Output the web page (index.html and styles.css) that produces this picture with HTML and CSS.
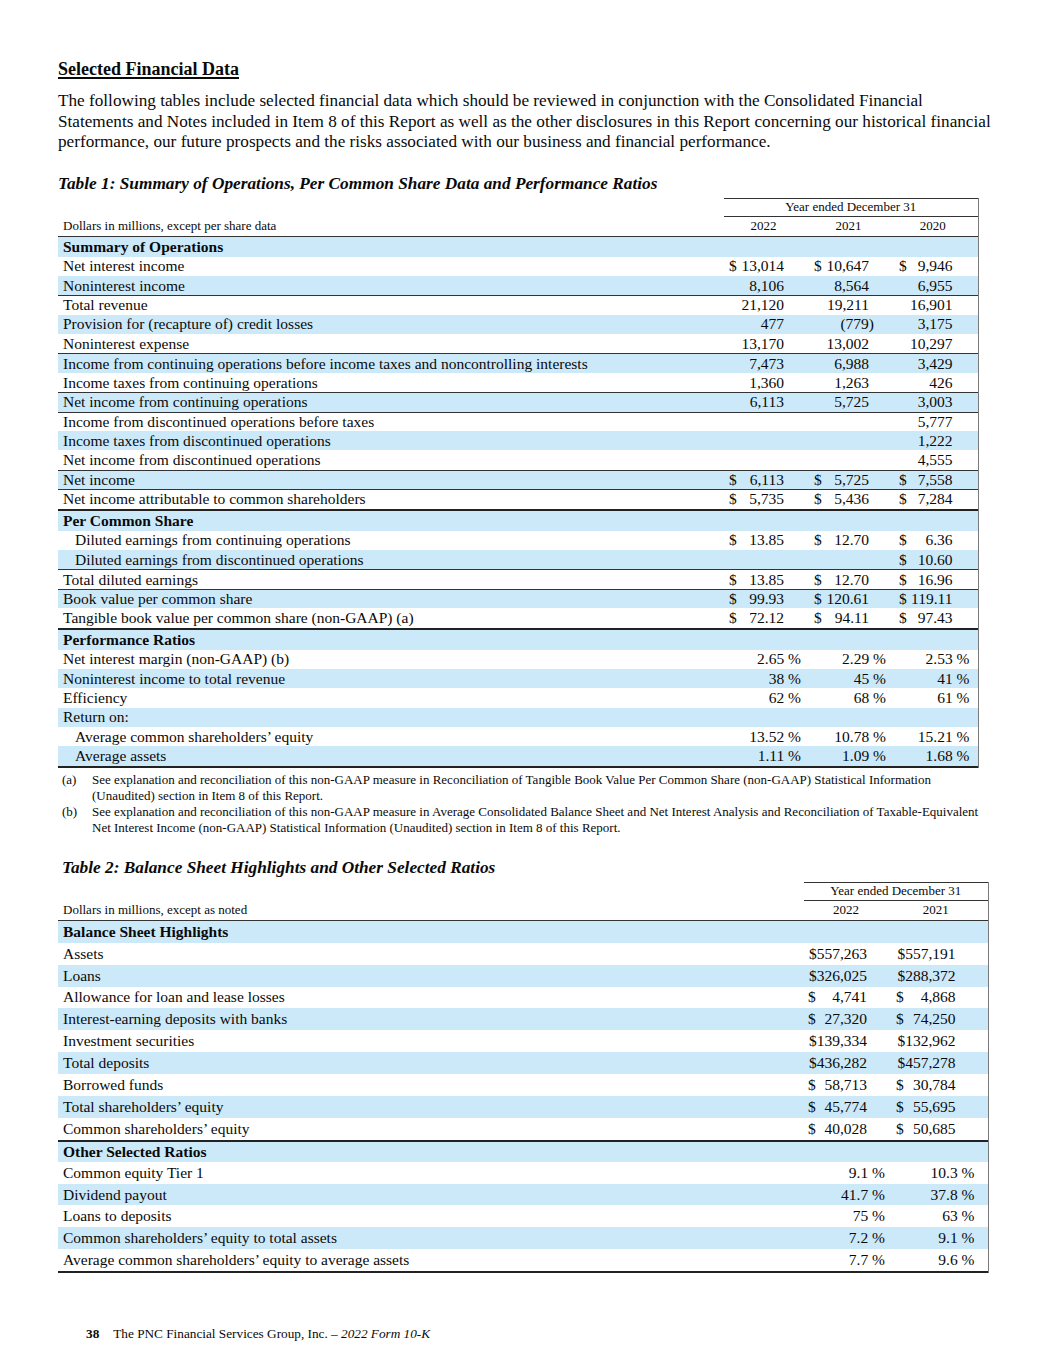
FILE: index.html
```html
<!DOCTYPE html>
<html lang="en">
<head>
<meta charset="utf-8">
<title>Selected Financial Data</title>
<link rel="stylesheet" href="styles.css">
</head>
<body>
<div class="page">
  <h1 class="title">Selected Financial Data</h1>
  <p class="intro">The following tables include selected financial data which should be reviewed in conjunction with the Consolidated Financial Statements and Notes included in Item 8 of this Report as well as the other disclosures in this Report concerning our historical financial performance, our future prospects and the risks associated with our business and financial performance.</p>

  <h2 class="tcap">Table 1: Summary of Operations, Per Common Share Data and Performance Ratios</h2>
  <div class="tbl t1">
    <div class="hdr1"><div></div><div class="ye">Year ended December 31</div></div>
    <div class="hdr2"><div class="unit">Dollars in millions, except per share data</div><div class="yr">2022</div><div class="yr">2021</div><div class="yr">2020</div></div>

    <div class="row sec b first"><div class="lbl">Summary of Operations</div><div></div><div></div><div></div></div>
    <div class="row"><div class="lbl">Net interest income</div><div class="v"><span>$</span><span class="n">13,014</span></div><div class="v"><span>$</span><span class="n">10,647</span></div><div class="v"><span>$</span><span class="n">9,946</span></div></div>
    <div class="row b"><div class="lbl">Noninterest income</div><div class="v"><span class="n">8,106</span></div><div class="v"><span class="n">8,564</span></div><div class="v"><span class="n">6,955</span></div></div>
    <div class="row bt"><div class="lbl">Total revenue</div><div class="v"><span class="n">21,120</span></div><div class="v"><span class="n">19,211</span></div><div class="v"><span class="n">16,901</span></div></div>
    <div class="row b"><div class="lbl">Provision for (recapture of) credit losses</div><div class="v"><span class="n">477</span></div><div class="v"><span class="n">(779<span class="hang">)</span></span></div><div class="v"><span class="n">3,175</span></div></div>
    <div class="row"><div class="lbl">Noninterest expense</div><div class="v"><span class="n">13,170</span></div><div class="v"><span class="n">13,002</span></div><div class="v"><span class="n">10,297</span></div></div>
    <div class="row b bt"><div class="lbl">Income from continuing operations before income taxes and noncontrolling interests</div><div class="v"><span class="n">7,473</span></div><div class="v"><span class="n">6,988</span></div><div class="v"><span class="n">3,429</span></div></div>
    <div class="row"><div class="lbl">Income taxes from continuing operations</div><div class="v"><span class="n">1,360</span></div><div class="v"><span class="n">1,263</span></div><div class="v"><span class="n">426</span></div></div>
    <div class="row b bt"><div class="lbl">Net income from continuing operations</div><div class="v"><span class="n">6,113</span></div><div class="v"><span class="n">5,725</span></div><div class="v"><span class="n">3,003</span></div></div>
    <div class="row bt"><div class="lbl">Income from discontinued operations before taxes</div><div class="v"></div><div class="v"></div><div class="v"><span class="n">5,777</span></div></div>
    <div class="row b"><div class="lbl">Income taxes from discontinued operations</div><div class="v"></div><div class="v"></div><div class="v"><span class="n">1,222</span></div></div>
    <div class="row"><div class="lbl">Net income from discontinued operations</div><div class="v"></div><div class="v"></div><div class="v"><span class="n">4,555</span></div></div>
    <div class="row b bt"><div class="lbl">Net income</div><div class="v"><span>$</span><span class="n">6,113</span></div><div class="v"><span>$</span><span class="n">5,725</span></div><div class="v"><span>$</span><span class="n">7,558</span></div></div>
    <div class="row bt"><div class="lbl">Net income attributable to common shareholders</div><div class="v"><span>$</span><span class="n">5,735</span></div><div class="v"><span>$</span><span class="n">5,436</span></div><div class="v"><span>$</span><span class="n">7,284</span></div></div>

    <div class="row sec b bt2"><div class="lbl">Per Common Share</div><div></div><div></div><div></div></div>
    <div class="row"><div class="lbl ind">Diluted earnings from continuing operations</div><div class="v"><span>$</span><span class="n">13.85</span></div><div class="v"><span>$</span><span class="n">12.70</span></div><div class="v"><span>$</span><span class="n">6.36</span></div></div>
    <div class="row b"><div class="lbl ind">Diluted earnings from discontinued operations</div><div class="v"></div><div class="v"></div><div class="v"><span>$</span><span class="n">10.60</span></div></div>
    <div class="row bt"><div class="lbl">Total diluted earnings</div><div class="v"><span>$</span><span class="n">13.85</span></div><div class="v"><span>$</span><span class="n">12.70</span></div><div class="v"><span>$</span><span class="n">16.96</span></div></div>
    <div class="row b bt"><div class="lbl">Book value per common share</div><div class="v"><span>$</span><span class="n">99.93</span></div><div class="v"><span>$</span><span class="n">120.61</span></div><div class="v"><span>$</span><span class="n">119.11</span></div></div>
    <div class="row"><div class="lbl">Tangible book value per common share (non-GAAP) (a)</div><div class="v"><span>$</span><span class="n">72.12</span></div><div class="v"><span>$</span><span class="n">94.11</span></div><div class="v"><span>$</span><span class="n">97.43</span></div></div>

    <div class="row sec b bt2"><div class="lbl">Performance Ratios</div><div></div><div></div><div></div></div>
    <div class="row"><div class="lbl">Net interest margin (non-GAAP) (b)</div><div class="v p"><span class="n">2.65 %</span></div><div class="v p"><span class="n">2.29 %</span></div><div class="v p"><span class="n">2.53 %</span></div></div>
    <div class="row b"><div class="lbl">Noninterest income to total revenue</div><div class="v p"><span class="n">38 %</span></div><div class="v p"><span class="n">45 %</span></div><div class="v p"><span class="n">41 %</span></div></div>
    <div class="row"><div class="lbl">Efficiency</div><div class="v p"><span class="n">62 %</span></div><div class="v p"><span class="n">68 %</span></div><div class="v p"><span class="n">61 %</span></div></div>
    <div class="row b"><div class="lbl">Return on:</div><div class="v"></div><div class="v"></div><div class="v"></div></div>
    <div class="row"><div class="lbl ind">Average common shareholders’ equity</div><div class="v p"><span class="n">13.52 %</span></div><div class="v p"><span class="n">10.78 %</span></div><div class="v p"><span class="n">15.21 %</span></div></div>
    <div class="row b last"><div class="lbl ind">Average assets</div><div class="v p"><span class="n">1.11 %</span></div><div class="v p"><span class="n">1.09 %</span></div><div class="v p"><span class="n">1.68 %</span></div></div>
  </div>

  <div class="notes">
    <div class="note"><span class="mk">(a)</span><span class="nt">See explanation and reconciliation of this non-GAAP measure in Reconciliation of Tangible Book Value Per Common Share (non-GAAP) Statistical Information (Unaudited) section in Item 8 of this Report.</span></div>
    <div class="note"><span class="mk">(b)</span><span class="nt">See explanation and reconciliation of this non-GAAP measure in Average Consolidated Balance Sheet and Net Interest Analysis and Reconciliation of Taxable-Equivalent Net Interest Income (non-GAAP) Statistical Information (Unaudited) section in Item 8 of this Report.</span></div>
  </div>

  <h2 class="tcap tcap2">Table 2: Balance Sheet Highlights and Other Selected Ratios</h2>
  <div class="tbl t2">
    <div class="hdr1"><div></div><div class="ye">Year ended December 31</div></div>
    <div class="hdr2"><div class="unit">Dollars in millions, except as noted</div><div class="yr">2022</div><div class="yr">2021</div></div>

    <div class="row sec b"><div class="lbl">Balance Sheet Highlights</div><div></div><div></div></div>
    <div class="row"><div class="lbl">Assets</div><div class="v"><span class="n">$557,263</span></div><div class="v"><span class="n">$557,191</span></div></div>
    <div class="row b"><div class="lbl">Loans</div><div class="v"><span class="n">$326,025</span></div><div class="v"><span class="n">$288,372</span></div></div>
    <div class="row"><div class="lbl">Allowance for loan and lease losses</div><div class="v"><span>$</span><span class="n">4,741</span></div><div class="v"><span>$</span><span class="n">4,868</span></div></div>
    <div class="row b"><div class="lbl">Interest-earning deposits with banks</div><div class="v"><span>$</span><span class="n">27,320</span></div><div class="v"><span>$</span><span class="n">74,250</span></div></div>
    <div class="row"><div class="lbl">Investment securities</div><div class="v"><span class="n">$139,334</span></div><div class="v"><span class="n">$132,962</span></div></div>
    <div class="row b"><div class="lbl">Total deposits</div><div class="v"><span class="n">$436,282</span></div><div class="v"><span class="n">$457,278</span></div></div>
    <div class="row"><div class="lbl">Borrowed funds</div><div class="v"><span>$</span><span class="n">58,713</span></div><div class="v"><span>$</span><span class="n">30,784</span></div></div>
    <div class="row b"><div class="lbl">Total shareholders’ equity</div><div class="v"><span>$</span><span class="n">45,774</span></div><div class="v"><span>$</span><span class="n">55,695</span></div></div>
    <div class="row"><div class="lbl">Common shareholders’ equity</div><div class="v"><span>$</span><span class="n">40,028</span></div><div class="v"><span>$</span><span class="n">50,685</span></div></div>

    <div class="row sec b bt2"><div class="lbl">Other Selected Ratios</div><div></div><div></div></div>
    <div class="row"><div class="lbl">Common equity Tier 1</div><div class="v p"><span class="n">9.1 %</span></div><div class="v p"><span class="n">10.3 %</span></div></div>
    <div class="row b"><div class="lbl">Dividend payout</div><div class="v p"><span class="n">41.7 %</span></div><div class="v p"><span class="n">37.8 %</span></div></div>
    <div class="row"><div class="lbl">Loans to deposits</div><div class="v p"><span class="n">75 %</span></div><div class="v p"><span class="n">63 %</span></div></div>
    <div class="row b"><div class="lbl">Common shareholders’ equity to total assets</div><div class="v p"><span class="n">7.2 %</span></div><div class="v p"><span class="n">9.1 %</span></div></div>
    <div class="row last"><div class="lbl">Average common shareholders’ equity to average assets</div><div class="v p"><span class="n">7.7 %</span></div><div class="v p"><span class="n">9.6 %</span></div></div>
  </div>

  <footer class="foot"><b>38</b><span class="co">The PNC Financial Services Group, Inc. – <i>2022 Form 10-K</i></span></footer>
</div>
</body>
</html>
```

FILE: styles.css
```css
* { box-sizing: border-box; }
html, body { margin: 0; padding: 0; background: #fff; }
body {
  font-family: "Liberation Serif", "Times New Roman", serif;
  color: #0a0a0a;
}
.page {
  width: 1055px;
  height: 1365px;
  padding: 59px 0 0 58px;
}
.title {
  margin: 0;
  font-size: 18px;
  line-height: 20px;
  font-weight: bold;
  text-decoration: underline;
  text-decoration-thickness: 1.5px;
  text-underline-offset: 2px;
}
.intro {
  margin: 12px 0 0;
  width: 940px;
  font-size: 17.2px;
  line-height: 20.5px;
}
.tcap {
  margin: 21px 0 0;
  font-size: 17.3px;
  line-height: 20px;
  font-weight: bold;
  font-style: italic;
}
.tcap2 { margin-top: 22px; padding-left: 4px; }

.tbl {
  margin-top: 4px;
  border-right: 1.5px solid #7a7a7a;
}
.t1 { width: 921px; }
.t2 { width: 931px; }

.t1 .row, .t1 .hdr2 { grid-template-columns: 666px 85px 85px 83.5px; }
.t1 .hdr1 { grid-template-columns: 666px 253.5px; }
.t2 .row, .t2 .hdr2 { grid-template-columns: 746px 90px 93.5px; }
.t2 .hdr1 { grid-template-columns: 746px 183.5px; }

.hdr1, .hdr2, .row { display: grid; }
.hdr1 { height: 19px; }
.hdr1 .ye {
  border-top: 1px solid #333;
  border-bottom: 1px solid #333;
  text-align: center;
  font-size: 13px;
  line-height: 16px;
}
.hdr2 {
  height: 20px;
  border-bottom: 1.5px solid #333;
  font-size: 13px;
  line-height: 18px;
}
.hdr2 .unit { padding-left: 5px; }
.hdr2 .yr { text-align: center; padding-right: 6px; }
.t2 .hdr2 .yr:last-child { padding-right: 10px; }

.row {
  height: 19.4px;
  align-items: center;
  font-size: 15.5px;
  line-height: 16px;
}
.t2 .row { height: 21.9px; }
.row.first { height: 20px; }
.row.b { background: #cce9fa; }
.row.bt { border-top: 1px solid #333; }
.row.bt2 { border-top: 2px solid #222; }
.row.sec { font-weight: bold; }
.t1 .row.sec.bt2 { height: 22px; }
.row.last { border-bottom: 2px solid #222; }
.t1 .row.last { height: 21.4px; }
.t2 .row.last { height: 23.9px; }

.lbl { padding-left: 5px; white-space: nowrap; }
.lbl.ind { padding-left: 17px; }

.v { display: flex; white-space: nowrap; }
.t1 .v { padding: 0 25px 0 5px; }
.t1 .v.p { padding-right: 8px; }
.t2 .v { padding: 0 27px 0 4px; }
.t2 .v:last-child { padding: 0 32px 0 2px; }
.t2 .v.p { padding-right: 9px; }
.t2 .v.p:last-child { padding-right: 13px; }
.v .n { margin-left: auto; }
.hang { margin-right: -5px; }

.notes { margin-top: 4px; font-size: 13px; line-height: 16px; }
.note { display: flex; }
.note .mk { width: 34px; flex: none; padding-left: 4px; }
.note .nt { width: 888px; }

.foot {
  margin-top: 53px;
  padding-left: 28px;
  font-size: 13.25px;
  line-height: 16px;
}
.foot b { margin-right: 14px; }
```
